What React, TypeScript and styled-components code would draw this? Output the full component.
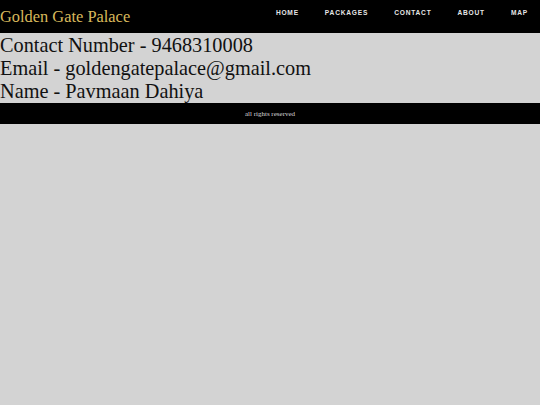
import React from 'react';
import styled, { createGlobalStyle } from 'styled-components';

const GlobalStyle = createGlobalStyle`
  html, body {
    margin: 0;
    padding: 0;
    background-color: #d3d3d3;
  }
  body {
    font-family: 'Liberation Serif', 'Times New Roman', serif;
  }
`;

const Header = styled.header`
  display: flex;
  justify-content: space-between;
  align-items: flex-start;
  height: 33px;
  background-color: #000;
`;

const Brand = styled.h1`
  margin: 0;
  padding-top: 7px;
  font-size: 16.4px;
  font-weight: normal;
  line-height: 20px;
  color: #d8b95c;
`;

const NavList = styled.ul`
  display: flex;
  margin: 0;
  padding: 0 12px 0 0;
  list-style: none;
`;

const NavItem = styled.li<{ $first?: boolean }>`
  margin-left: ${({ $first }) => ($first ? '0' : '26px')};
`;

const NavLink = styled.a`
  display: block;
  padding-top: 9px;
  font-family: 'Liberation Sans', Arial, sans-serif;
  font-size: 6.6px;
  font-weight: bold;
  letter-spacing: 0.8px;
  line-height: 8px;
  color: #e6e6e6;
  text-decoration: none;
`;

const Info = styled.section`
  font-size: 20.3px;
  line-height: 23px;
  color: #111;
  padding-top: 1px;
`;

const InfoLine = styled.div``;

const Footer = styled.footer`
  display: flex;
  align-items: center;
  justify-content: center;
  height: 21px;
  background-color: #000;
  font-size: 7px;
  color: #d8d8d8;
`;

const links = ['HOME', 'PACKAGES', 'CONTACT', 'ABOUT', 'MAP'];

export default function App() {
  return (
    <>
      <GlobalStyle />
      <Header>
        <Brand>Golden Gate Palace</Brand>
        <NavList>
          {links.map((l, i) => (
            <NavItem key={l} $first={i === 0}>
              <NavLink href="#">{l}</NavLink>
            </NavItem>
          ))}
        </NavList>
      </Header>
      <Info>
        <InfoLine>Contact Number - 9468310008</InfoLine>
        <InfoLine>Email - goldengatepalace@gmail.com</InfoLine>
        <InfoLine>Name - Pavmaan Dahiya</InfoLine>
      </Info>
      <Footer>all rights reserved</Footer>
    </>
  );
}
